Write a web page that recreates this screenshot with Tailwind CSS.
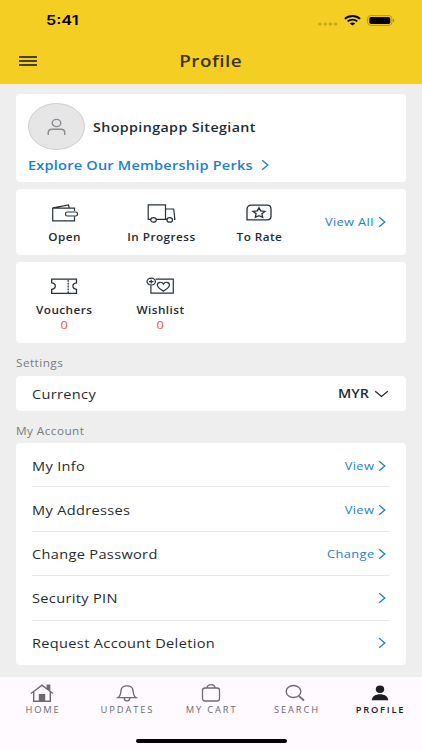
<!DOCTYPE html>
<html lang="en">
<head>
<meta charset="utf-8">
<meta name="viewport" content="width=device-width, initial-scale=1">
<title>Profile</title>
<script src="https://cdn.jsdelivr.net/npm/@tailwindcss/browser@4"></script>
</head>
<body class="h-[750px] w-[422px] overflow-hidden bg-[#eeeeee] font-['Open_Sans','Noto_Sans',sans-serif] text-[#1f2b33]">
<svg class="hidden">
  <symbol id="chev" viewBox="0 0 8 12"><path d="M1.2 1.2 6.8 6 1.2 10.8" fill="none" stroke="currentColor" stroke-width="1.3"/></symbol>
</svg>
<div class="flex h-[750px] flex-col">
  <header class="flex h-[84px] shrink-0 flex-col bg-[#f4ce22]">
    <div class="flex h-[40px] items-center justify-between pr-[27px] pl-[46px] text-black">
      <span class="inline-block origin-left scale-x-[1.2] pt-[1px] font-['Inter',sans-serif] text-[13.5px] font-semibold leading-none">5:41</span>
      <div class="flex items-center">
        <svg class="mt-[7px] mr-[6px] h-[4px] w-[20px]" viewBox="0 0 20 4" fill="#c4a41f"><ellipse cx="2" cy="2" rx="1.7" ry="1.5"/><ellipse cx="7.200" cy="2" rx="1.7" ry="1.5"/><ellipse cx="12.400" cy="2" rx="1.7" ry="1.5"/><ellipse cx="17.600" cy="2" rx="1.7" ry="1.5"/></svg>
        <svg class="mr-[6px] h-[11px] w-[17px]" viewBox="0 0 17 11" fill="none" stroke="#000" stroke-width="1.9"><path d="M.9 3.900C5 .1 12 .1 16.100 3.900"/><path d="M3.600 6.400C6.300 4 10.700 4 13.400 6.400"/><path d="M8.500 10.600 5.800 8.500C7.300 7 9.700 7 11.200 8.500Z" fill="#000" stroke="none"/></svg>
        <svg class="h-[11px] w-[28px]" viewBox="0 0 28 11"><rect x=".6" y=".6" width="24.300" height="9.800" rx="3" fill="none" stroke="#b3961d"/><rect x="2.300" y="1.900" width="21" height="7.200" rx="1.800" fill="#000"/><path d="M26 3.800c1.800.6 1.800 2.800 0 3.400Z" fill="#a08618"/></svg>
      </div>
    </div>
    <div class="grid h-[42px] grid-cols-[1fr_auto_1fr] items-center px-[19px]">
      <div class="flex w-[18px] flex-col gap-[2px]"><i class="h-[2px] bg-[#4a4118]"></i><i class="h-[2px] bg-[#4a4118]"></i><i class="h-[2px] bg-[#4a4118]"></i></div>
      <h1 class="inline-block scale-x-[1.180] text-[16px] font-semibold leading-none tracking-[0.4px] text-[#3a3318]">Profile</h1>
    </div>
  </header>

  <main class="flex h-[593px] shrink-0 flex-col px-4 pt-[10px]">
    <section class="h-[88px] rounded-[4px] bg-white pt-[9px] pl-3">
      <div class="flex items-center gap-2">
        <div class="flex h-[47px] w-[57px] items-center justify-center rounded-[50%] border border-[#d0d0d0] bg-[#e6e6e6]">
          <svg class="h-[18px] w-[19px]" viewBox="0 0 19 18" fill="none" stroke="#858b90" stroke-width="1.400"><ellipse cx="9.500" cy="5" rx="4.300" ry="3.600"/><path d="M1.200 17v-2c0-2.400 1.600-3.700 4-3.700h8.600c2.400 0 4 1.300 4 3.700v2"/></svg>
        </div>
        <span class="inline-block origin-left scale-x-[1.140] pt-[3px] text-[12.500px] font-semibold leading-none tracking-[.35px]">Shoppingapp Sitegiant</span>
      </div>
      <div class="mt-[5px] flex h-[20px] items-center text-[#1b7fd0]">
        <div class="w-[233px]"><span class="block w-max origin-left scale-x-[1.120] text-[13px] font-semibold leading-none tracking-[.180px]">Explore Our Membership Perks</span></div>
        <svg class="h-[12px] w-[8px]"><use href="#chev"/></svg>
      </div>
    </section>

    <section class="mt-[7px] flex h-[66px] rounded-[4px] bg-white pt-[14px]">
      <div class="flex w-[97px] flex-col items-center">
        <svg class="h-[20px] w-[28px]" viewBox="0 0 28 20" fill="none" stroke="#26323a" stroke-width="1.200"><path d="M23.500 8V5.100H1.700v12.700h21.800V13.500M2 4.900 17.500 2l.7 2.800"/><rect x="14.500" y="9" width="12" height="4" rx="1.800" fill="#fff"/></svg>
        <span class="mt-[9px] inline-block scale-x-[1.120] text-[10.500px] font-semibold leading-none tracking-[.4px]">Open</span>
      </div>
      <div class="flex w-[97px] flex-col items-center">
        <svg class="h-[20px] w-[30px]" viewBox="0 0 30 20" fill="none" stroke="#26323a" stroke-width="1.200"><path d="M3.500 16.400H1.200V1.800h17.300v14.600H9M18.500 6h8.200l1.200 10.400h-1M18.500 16.400h2"/><ellipse cx="6.500" cy="16.900" rx="2.800" ry="2.200"/><ellipse cx="22.700" cy="16.900" rx="2.800" ry="2.200"/></svg>
        <span class="mt-[9px] inline-block scale-x-[1.120] text-[10.500px] font-semibold leading-none tracking-[.4px] whitespace-nowrap">In Progress</span>
      </div>
      <div class="flex w-[97px] flex-col items-center">
        <svg class="h-[20px] w-[26px]" viewBox="0 0 26 20" fill="none" stroke="#26323a" stroke-width="1.300"><path d="M1 16.900V6.500C1 3.800 2.500 2.200 5 2.200h16c2.500 0 4 1.500 4 3.700v7.300c0 2.200-1.500 3.700-4 3.700Z"/><path d="m13 4.700 1.700 3.100 4.300.6-3.100 2.400.8 3.500-3.700-1.700-3.700 1.700.8-3.500L7 8.400l4.300-.6Z"/></svg>
        <span class="mt-[9px] ml-[1px] inline-block scale-x-[1.120] text-[10.500px] font-semibold leading-none tracking-[.4px] whitespace-nowrap">To Rate</span>
      </div>
      <div class="flex h-[38px] flex-1 items-center justify-end gap-[4px] pr-[20px] text-[#1b7fd0]">
        <span class="inline-block origin-right scale-x-[1.170] pb-[1px] text-[11px] leading-none tracking-[.3px] whitespace-nowrap">View All</span>
        <svg class="h-[12px] w-[8px]"><use href="#chev"/></svg>
      </div>
    </section>

    <section class="mt-[7px] flex h-[81px] rounded-[4px] bg-white pt-[14px]">
      <div class="flex w-[96px] flex-col items-center">
        <svg class="h-[20px] w-[28px]" viewBox="0 0 28 20" fill="none" stroke="#26323a" stroke-width="1.300"><path d="M1.700 3.200h24.800v3.700c-2.800.3-3.600 1.500-3.600 3.200s.8 2.900 3.600 3.200v4H1.700v-4c2.800-.3 3.600-1.500 3.600-3.200S4.500 7.200 1.700 6.900Z"/><path d="M18.200 4v13" stroke-dasharray="1.800 1"/></svg>
        <span class="mt-[9px] inline-block scale-x-[1.120] text-[10.500px] font-semibold leading-none tracking-[.4px]">Vouchers</span>
        <span class="mt-[4px] inline-block scale-x-[1.200] text-[10.500px] leading-none text-[#e05548]">0</span>
      </div>
      <div class="flex w-[96px] flex-col items-center">
        <svg class="h-[20px] w-[28px]" viewBox="0 0 28 20" fill="none" stroke="#26323a" stroke-width="1.200"><path d="M9.500 3.200h17.800v14H4.900V9.500"/><ellipse cx="5.200" cy="5.600" rx="4.200" ry="3.500"/><path d="M5.200 3.700v3.800M2.900 5.600h4.600"/><path d="M17.400 15.200c-2.600-1.800-6-3.500-6-6.200 0-3.200 4.600-3.700 6-.9 1.400-2.800 6-2.300 6 .9 0 2.700-3.400 4.400-6 6.200Z"/></svg>
        <span class="mt-[9px] inline-block scale-x-[1.120] text-[10.500px] font-semibold leading-none tracking-[.4px]">Wishlist</span>
        <span class="mt-[4px] inline-block scale-x-[1.200] text-[10.500px] leading-none text-[#e05548]">0</span>
      </div>
    </section>

    <h2 class="mt-[14px] h-[12px] text-[10.500px] leading-[12px] text-[#777b7e]"><span class="inline-block origin-left scale-x-[1.120] tracking-[.4px]">Settings</span></h2>
    <section class="mt-[7px] flex h-[35px] items-center justify-between rounded-[4px] bg-white pr-[17px] pl-4">
      <span class="inline-block origin-left scale-x-[1.120] pt-[2px] text-[13px] leading-none tracking-[.3px]">Currency</span>
      <div class="flex items-center gap-[5px]">
        <span class="inline-block origin-right scale-x-[1.150] pt-[2px] text-[12.500px] font-semibold leading-none">MYR</span>
        <svg class="h-[8px] w-[15px]" viewBox="0 0 15 8" fill="none" stroke="#1f2b33" stroke-width="1.300"><path d="M1.200 1.200 7.500 6.500l6.300-5.300"/></svg>
      </div>
    </section>

    <h2 class="mt-[14px] h-[12px] text-[10.500px] leading-[12px] text-[#777b7e]"><span class="inline-block origin-left scale-x-[1.120] tracking-[.4px]">My Account</span></h2>
    <section class="mt-[6px] grid h-[222px] grid-rows-5 divide-y divide-[#e8e8e8] rounded-[4px] bg-white px-4">
      <div class="flex items-center justify-between pt-[2px] pr-[4px]">
        <span class="inline-block origin-left scale-x-[1.120] pt-[1px] text-[13px] leading-none tracking-[.3px]">My Info</span>
        <div class="flex items-center gap-[4px] text-[#1b7fd0]"><span class="inline-block origin-right scale-x-[1.170] text-[11px] leading-none tracking-[.3px]">View</span><svg class="h-[12px] w-[8px]"><use href="#chev"/></svg></div>
      </div>
      <div class="flex items-center justify-between pt-px pr-[4px]">
        <span class="inline-block origin-left scale-x-[1.120] pt-[1px] text-[13px] leading-none tracking-[.3px]">My Addresses</span>
        <div class="flex items-center gap-[4px] text-[#1b7fd0]"><span class="inline-block origin-right scale-x-[1.170] text-[11px] leading-none tracking-[.3px]">View</span><svg class="h-[12px] w-[8px]"><use href="#chev"/></svg></div>
      </div>
      <div class="flex items-center justify-between pt-px pr-[4px]">
        <span class="inline-block origin-left scale-x-[1.120] pt-[1px] text-[13px] leading-none tracking-[.3px]">Change Password</span>
        <div class="flex items-center gap-[4px] text-[#1b7fd0]"><span class="inline-block origin-right scale-x-[1.170] text-[11px] leading-none tracking-[.3px]">Change</span><svg class="h-[12px] w-[8px]"><use href="#chev"/></svg></div>
      </div>
      <div class="flex items-center justify-between pr-[4px]">
        <span class="inline-block origin-left scale-x-[1.120] pt-[2px] text-[13px] leading-none tracking-[.3px]">Security PIN</span>
        <svg class="h-[12px] w-[8px] text-[#1b7fd0]"><use href="#chev"/></svg>
      </div>
      <div class="flex items-center justify-between pr-[4px]">
        <span class="inline-block origin-left scale-x-[1.120] pt-[1px] text-[13px] leading-none tracking-[.3px]">Request Account Deletion</span>
        <svg class="h-[12px] w-[8px] text-[#1b7fd0]"><use href="#chev"/></svg>
      </div>
    </section>
  </main>

  <nav class="flex h-[73px] shrink-0 flex-col items-center bg-[#fefaff]">
    <div class="grid h-[62px] w-full grid-cols-5 pt-[6px] text-[8.500px] leading-none text-[#6c6b6e]">
      <a class="flex flex-col items-center">
        <svg class="h-[20px] w-[24px]" viewBox="0 0 24 20" fill="none" stroke="currentColor" stroke-width="1.400"><path d="M1 10.500 12 2.200l11 8.300M3.700 9v9.200h16.600V9"/><path d="M17.300 6V2.300h2.300v5.200" fill="currentColor"/><path d="M9.500 18v-6.200h5V18Z" fill="currentColor"/></svg>
        <span class="mt-[3px] ml-[2px] inline-block scale-x-[1.100] tracking-[1.700px]">HOME</span>
      </a>
      <a class="flex flex-col items-center">
        <svg class="h-[20px] w-[22px]" viewBox="0 0 22 20" fill="none" stroke="currentColor" stroke-width="1.300"><path d="M2 14.600c2.700-1.700 2.700-3.600 2.900-6.700C5.100 4.700 7.400 2.800 11 2.800s5.900 1.900 6.100 5.100c.2 3.100.2 5 2.900 6.700Z"/><path d="M8.200 15c.2 3.900 5.400 3.900 5.600 0"/></svg>
        <span class="mt-[3px] ml-[2px] inline-block scale-x-[1.100] tracking-[1.700px]">UPDATES</span>
      </a>
      <a class="flex flex-col items-center">
        <svg class="h-[20px] w-[20px]" viewBox="0 0 20 20" fill="none" stroke="currentColor" stroke-width="1.300"><rect x="1.500" y="5" width="17" height="13" rx="2.500"/><path d="M6 5c0-4.500 8-4.500 8 0"/></svg>
        <span class="mt-[3px] ml-[2px] inline-block scale-x-[1.100] tracking-[1.700px] whitespace-nowrap">MY CART</span>
      </a>
      <a class="flex flex-col items-center">
        <svg class="h-[20px] w-[20px]" viewBox="0 0 20 20" fill="none" stroke="currentColor" stroke-width="1.400"><ellipse cx="8.500" cy="8.500" rx="7.300" ry="6"/><path d="m13.700 12.900 5.300 4.600" stroke-width="1.800"/></svg>
        <span class="mt-[3px] ml-[3px] inline-block scale-x-[1.100] tracking-[1.700px]">SEARCH</span>
      </a>
      <a class="flex flex-col items-center text-[#1d1c1f]">
        <svg class="h-[20px] w-[18px]" viewBox="0 0 18 20" fill="currentColor"><ellipse cx="9" cy="6.300" rx="4.200" ry="3.700"/><path d="M.8 17.300C.8 9.300 17.200 9.300 17.200 17.300Z"/></svg>
        <span class="mt-[3px] ml-[2px] inline-block scale-x-[1.100] font-semibold tracking-[1.600px]">PROFILE</span>
      </a>
    </div>
    <div class="h-[4px] w-[151px] rounded-full bg-black"></div>
  </nav>
</div>
</body>
</html>
